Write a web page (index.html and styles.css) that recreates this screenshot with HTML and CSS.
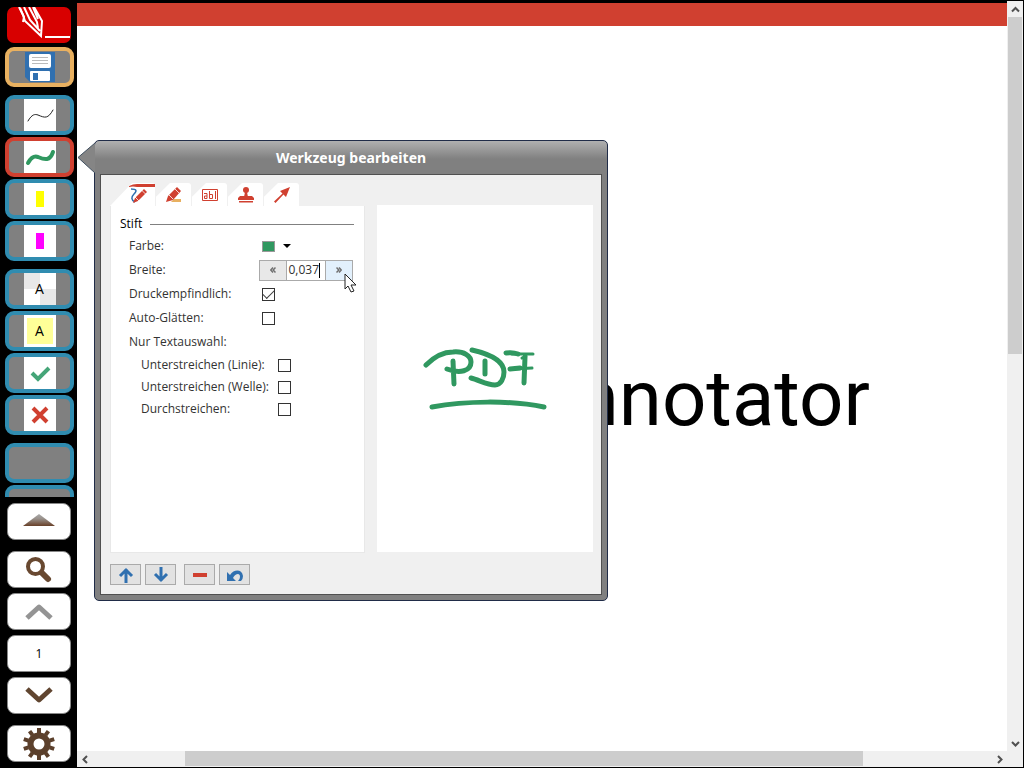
FILE: index.html
```html
<!DOCTYPE html>
<html lang="de">
<head>
<meta charset="utf-8">
<meta name="viewport" content="width=device-width, initial-scale=1">
<title>PDF Annotator</title>
<link rel="stylesheet" href="styles.css">
</head>
<body>
<div class="app">
  <nav class="sidebar" aria-label="Werkzeuge">
    <div class="tools">
      <button class="logo" aria-label="Menü"><svg width="64" height="36" viewBox="0 0 64 36" fill="none" stroke="#fff"><path d="M12 0l4 8 2 6 16 15 1-15L27 0M17 0l6 13 10 11M22 0l8 15 1 6M26 0l5 12" stroke-width="2"/><path d="M13 1l4 9-1 5" stroke-width="2"/><path d="M38 30h25" stroke-width="2"/></svg></button>
      <button class="tool save" aria-label="Speichern"><svg width="30" height="30" viewBox="0 0 30 30"><path fill="#3070b0" d="M0 0h30v30H5l-5-5z"/><rect x="4" y="2" width="22" height="14" rx="2" fill="#fff"/><path stroke="#bbb" d="M7 5.500h16M7 8.500h16M7 11.500h16"/><rect x="5" y="19" width="20" height="10" rx="1" fill="#fff"/><path fill="#3070b0" d="M8 21h5v7H8z"/></svg></button>
      <div class="group">
        <button class="tool" aria-label="Stift dünn"><span class="tile"><svg width="32" height="32" fill="none" stroke="#222" stroke-linecap="round"><path d="M4 22C8 15 11 15 14 16C21 19 24 20 29 11"/></svg></span></button>
        <button class="tool active" aria-label="Stift grün"><span class="tile"><svg width="32" height="32" fill="none" stroke="#309860" stroke-width="4" stroke-linecap="round"><path d="M4 22C8 15 11 15 14 16C21 19 26 20 29 11"/></svg></span></button>
        <button class="tool" aria-label="Textmarker gelb"><span class="tile"><span class="marker yellow"></span></span></button>
        <button class="tool" aria-label="Textmarker magenta"><span class="tile"><span class="marker magenta"></span></span></button>
      </div>
      <div class="group">
        <button class="tool"><span class="tile checker">A</span></button>
        <button class="tool"><span class="tile note">A</span></button>
        <button class="tool" aria-label="Haken"><span class="tile"><svg width="32" height="32" fill="none" stroke="#45a578" stroke-width="4"><path d="M8 16l6 6 11-11"/></svg></span></button>
        <button class="tool" aria-label="Kreuz"><span class="tile"><svg width="32" height="32" fill="none" stroke="#d04030" stroke-width="4"><path d="M9 9l14 14M23 9L9 23"/></svg></span></button>
      </div>
      <div class="group">
        <button class="tool" aria-label="Leer"></button>
        <button class="tool" aria-label="Leer"></button>
      </div>
    </div>
    <div class="controls">
      <button class="control split" aria-label="Einklappen"><svg width="32" height="16" viewBox="0 0 32 16"><defs><linearGradient id="g" x2="0" y2="1"><stop stop-color="#aaa"/><stop offset=".4" stop-color="#98908a"/><stop offset="1" stop-color="#684028"/></linearGradient></defs><path fill="url(#g)" d="M16 0l16 12H0z"/></svg></button>
      <button class="control" aria-label="Zoom"><svg width="32" height="32" fill="none" stroke="#684830"><circle cx="12.500" cy="12.500" r="7.500" stroke-width="4"/><path d="M19 19l6 6" stroke-width="6" stroke-linecap="round"/></svg></button>
      <button class="control" aria-label="Vorherige Seite"><svg width="32" height="32" fill="none" stroke="#949494" stroke-width="5" stroke-linejoin="round"><path d="M4 22l12-11 12 11"/></svg></button>
      <button class="control">1</button>
      <button class="control split" aria-label="Nächste Seite"><svg width="32" height="32" fill="none" stroke="#604530" stroke-width="5" stroke-linejoin="round"><path d="M4 9l12 11 12-11"/></svg></button>
      <button class="control" aria-label="Einstellungen"><svg width="32" height="32" viewBox="-16 -16 32 32" fill="none" stroke="#5c402c"><circle r="8.500" stroke-width="6"/><path stroke-width="4" d="M0-11v-5M0 11v5M6.500-8.900l2.900-4M-6.500 8.900l-2.900 4M10.500-3.400l4.700-1.500M-10.500 3.400l-4.700 1.500M10.500 3.400l4.700 1.500M-10.500-3.400l-4.700-1.500M6.500 8.900l2.900 4M-6.500-8.900l-2.900-4"/></svg></button>
    </div>
  </nav>

  <main class="viewer">
    <div class="page"><h1>PDF Annotator</h1></div>
    <div class="vscroll">
      <button aria-label="Nach oben"><svg width="9" height="9"><path d="M1 6.500L4.500 3 8 6.500"/></svg></button>
      <div class="track"><div class="thumb"></div></div>
      <button aria-label="Nach unten"><svg width="9" height="9"><path d="M1 3l3.500 3.500L8 3"/></svg></button>
    </div>
    <div class="hscroll">
      <button aria-label="Nach links"><svg width="9" height="9"><path d="M6 1L2.500 4.500 6 8"/></svg></button>
      <div class="track"><div class="thumb"></div></div>
      <button aria-label="Nach rechts"><svg width="9" height="9"><path d="M3 1l3.500 3.500L3 8"/></svg></button>
    </div>
    <div class="corner"></div>

    <section class="dialog" role="dialog" aria-labelledby="title">
      <svg class="pointer" width="18" height="30" viewBox="0 0 18 30"><path d="M18 0L1 14.500 18 30" fill="#858585" stroke="#405060"/></svg>
      <h2 id="title">Werkzeug bearbeiten</h2>
      <div class="content">
        <div class="left">
          <div class="tabs" role="tablist">
            <button class="tab current" role="tab" aria-label="Stift"><svg width="26" height="22" viewBox="0 0 26 22"><path d="M0 2Q4 0 8 0h18v3H8Q4 2 0 3z" fill="#d04030"/><path d="M2 5c6 0 6 2 3 5s-3 6 1 8" fill="none" stroke="#3070b0" stroke-width="1.500"/><path d="M4 19l2-5 9-9 3 3-9 9z" fill="#d04030"/><path d="M12.500 6l4 4M6 13l4 4" stroke="#fff" stroke-width=".8"/></svg></button>
            <button class="tab" role="tab" aria-label="Textmarker"><svg width="18" height="18"><path d="M9 13h7v3H6z" fill="#e8b060"/><path d="M1 16l2-6 9-9 4 4-8 9z" fill="#d04030"/><path d="M10 3l4 4M4 9l4 4" stroke="#fff" stroke-width=".8"/></svg></button>
            <button class="tab" role="tab" aria-label="Text"><svg width="16" height="12" fill="none" stroke="#d04030"><path d="M.500.500h15v11H.500zM2 4.500h3v5H2.500v-2.500H5M7.500 2v7.500h3v-4h-3M13.500 2v8"/></svg></button>
            <button class="tab" role="tab" aria-label="Stempel"><svg width="16" height="16" fill="#d04030"><circle cx="8" cy="3" r="3"/><path d="M7 5h2l1 5H6zM2 9h12l2 2v2H0v-2zM1 14h14v1.500H1z"/></svg></button>
            <button class="tab" role="tab" aria-label="Pfeil"><svg width="16" height="16" fill="#d04030"><path d="M16 0l-4 10-2.500-2.500L1.500 16 0 14.500l8.500-8L6 4z"/></svg></button>
          </div>
          <form class="panel">
            <h3>Stift</h3>
            <div class="row"><label for="color">Farbe:</label><button id="color" type="button" class="color" aria-label="Farbe wählen"><span class="swatch"></span><svg width="8" height="4"><path d="M0 0h8L4 4z"/></svg></button></div>
            <div class="row"><label for="width">Breite:</label><span class="spinner"><button type="button" aria-label="Kleiner"><svg width="6" height="6"><path d="M3 .500L.700 3 3 5.500M5.500.500L3.200 3l2.300 2.500"/></svg></button><input id="width" type="text" value="0,037"><button type="button" class="hover" aria-label="Größer"><svg width="6" height="6"><path d="M.500.500L2.800 3 .500 5.500M3 .500L5.300 3 3 5.500"/></svg></button><span class="caret"></span></span></div>
            <div class="row"><label for="pressure">Druckempfindlich:</label><input id="pressure" type="checkbox" checked></div>
            <div class="row"><label for="smooth">Auto-Glätten:</label><input id="smooth" type="checkbox"></div>
            <div class="row">Nur Textauswahl:</div>
            <div class="row sub"><label for="line">Unterstreichen (Linie):</label><input id="line" type="checkbox"></div>
            <div class="row sub"><label for="wave">Unterstreichen (Welle):</label><input id="wave" type="checkbox"></div>
            <div class="row sub"><label for="strike">Durchstreichen:</label><input id="strike" type="checkbox"></div>
          </form>
        </div>
        <div class="preview"><svg width="130" height="66" viewBox="420 346 130 66" fill="none" stroke="#309860" stroke-width="5" stroke-linecap="round" stroke-linejoin="round"><path d="M426 365C433 358 443 352 453 352C464 351 471 356 471 362C471 371 460 374 447 369M453 361L454 384M472 350C485 353 504 359 504 372C504 378 501 385 495 385C487 385 479 380 471 378M485 361V374M506 353Q513 352 518 354M525 357L524 383M510 369L520 368"/><path stroke-width="3" d="M512 354L533 354M514 369L532 368M522 358L526 356"/><path d="M432 407C465 401 510 400 544 407"/></svg></div>
        <div class="actions">
          <button aria-label="Nach oben"><svg width="16" height="16" fill="none" stroke="#3070b0" stroke-width="3"><path d="M8 16V2M2 9l6-6 6 6"/></svg></button>
          <button aria-label="Nach unten"><svg width="16" height="16" fill="none" stroke="#3070b0" stroke-width="3"><path d="M8 0v14M2 7l6 6 6-6"/></svg></button>
          <button class="minus" aria-label="Entfernen"><svg width="16" height="16"><path d="M1 6h14v4H1z" fill="#d04030"/></svg></button>
          <button aria-label="Rückgängig"><svg width="16" height="16"><path d="M0 5v9h9l-3-3C8 7 13 5 13 10q0 2-2 4h3q2-2 2-5C15 2 7 2 3 8z" fill="#3070b0"/></svg></button>
        </div>
      </div>
    </section>
    <svg class="cursor" width="13" height="20" viewBox="0 0 13 20"><path d="M1 1v15l3-3 3 6 3-1-3-6h5z" fill="#fff" stroke="#222"/></svg>
  </main>
</div>
</body>
</html>
```
FILE: styles.css
```css
* { box-sizing: border-box; }
body { margin: 0; background: #000; font: 12px/16px "Open Sans", "Noto Sans", sans-serif; color: #333; }
button, input { font: inherit; color: inherit; margin: 0; padding: 0; border: 0; background: none; }
button { display: flex; align-items: center; justify-content: center; }
h1, h2, h3 { margin: 0; }
svg { display: block; flex: none; }
.app { display: grid; grid-template-columns: 77px 1fr; height: 100vh; }

.sidebar { display: flex; flex-direction: column; min-height: 0; padding: 7px 3px 6px 5px; }
.tools { flex: 1; min-height: 0; overflow: hidden; display: flex; flex-direction: column; gap: 8px; }
.group { display: flex; flex-direction: column; gap: 2px; }
.tool { flex: none; width: 69px; height: 40px; border: 4px solid #308cb0; border-radius: 9px; background: #808080; }
.save { border-color: #e8b060; margin-top: -4px; }
.tool.active { border-color: #d04030; }
.logo { flex: none; width: 64px; height: 36px; margin-left: 2px; border-radius: 7px; background: #d80000; overflow: hidden; }
.tile { width: 32px; height: 32px; background: #fff; display: flex; align-items: center; justify-content: center; font-size: 14px; color: #000; }
.marker { width: 8px; height: 16px; }
.yellow { background: #ff0; }
.magenta { background: #f0f; }
.checker { background: conic-gradient(#fff 25%, #e8e8e8 0 50%, #fff 0 75%, #e8e8e8 0); }
.note { background: #ffff98; border: 3px solid #fff; }
.controls { display: flex; flex-direction: column; gap: 5px; padding: 6px 2px 0; }
.control { width: 64px; height: 37px; border: 1px solid #888; border-radius: 8px; background: #fff; color: #000; }
.split { margin-bottom: 6px; }

.viewer { position: relative; display: grid; grid-template-columns: 1fr 16px; grid-template-rows: 1fr 16px; min-width: 0; padding: 1px 1px 1px 0; background: #000; }
.page { margin-top: 2px; padding: 20px 137px 0 0; background: #fff; border-top: 23px solid #d04030; display: flex; align-items: center; justify-content: flex-end; overflow: hidden; }
.page h1 { font: 400 78px/92px Roboto, sans-serif; color: #000; white-space: nowrap; }
.vscroll, .hscroll, .corner { background: #f0f0f0; }
.vscroll { display: flex; flex-direction: column; }
.hscroll { display: flex; }
.vscroll button, .hscroll button { width: 16px; height: 16px; flex: none; }
.vscroll svg, .hscroll svg { fill: none; stroke: #505050; stroke-width: 2; }
.track { flex: 1; }
.vscroll .thumb { height: 47%; margin: 0 1px; background: #cdcdcd; }
.hscroll .thumb { height: 15px; width: 75.5%; margin-left: 10.2%; background: #cdcdcd; }

.dialog { position: absolute; left: 17px; top: 140px; width: 514px; padding: 0 5px; border: 1px solid #202c48; border-bottom-width: 1px; padding-bottom: 5px; border-radius: 5px; background: linear-gradient(#b0b0b0, #808080 18px); }
.pointer { position: absolute; left: -18px; top: 2px; }
.dialog h2 { font: 700 14px/33px "Noto Sans", "Open Sans", sans-serif; color: #fff; text-align: center; }
.content { display: grid; grid-template-columns: 255px 216px; column-gap: 12px; border: 1px solid #505050; background: #f0f0f0; padding: 8px 8px 9px 9px; }
.left { display: flex; flex-direction: column; }
.tabs { display: flex; gap: 1px; height: 23px; }
.tab { width: 35px; height: 23px; background: #fff; border-radius: 0 3px 0 0; clip-path: polygon(0 60%, 14px 0, 100% 0, 100% 100%, 0 100%); }
.tab.current { width: 45px; justify-content: flex-end; clip-path: polygon(0 100%, 22px 0, 100% 0, 100% 100%); }
.panel { min-height: 347px; background: #fff; padding: 8px 10px 7px 9px; border: 1px solid #e8e8e8; border-top: 0; }
.panel h3 { display: flex; align-items: center; gap: 8px; font-size: 12px; line-height: 20px; font-weight: 400; color: #000; }
.panel h3::after { content: ""; flex: 1; height: 1px; background: #808080; }
.row { display: grid; grid-template-columns: 133px 1fr; align-items: center; height: 24px; padding-left: 9px; }
.row.sub { grid-template-columns: 137px 1fr; height: 22px; padding-left: 21px; }
.color { justify-content: start; gap: 8px; height: 16px; }
.swatch { width: 13px; height: 11px; background: #309860; border: 1px solid #999; }
.spinner { position: relative; display: flex; width: 94px; height: 21px; margin-left: -3px; border: 1px solid #aaa; }
.spinner button { width: 26px; background: #e8e8e8; }
.spinner .hover { background: #e2f0fc; }
.spinner svg { fill: none; stroke: #707070; stroke-width: 1.5; }
.spinner input { flex: 1; min-width: 0; border: solid #aaa; border-width: 0 1px; text-align: right; padding-right: 6px; background: #fff; }
.caret { position: absolute; right: 32px; top: 2px; width: 1px; height: 15px; background: #000; }
input[type="checkbox"] { appearance: none; width: 13px; height: 13px; border: 1px solid #333; background: #fff; display: grid; place-items: center; }
input[type="checkbox"]:checked::after { content: ""; width: 10px; height: 5px; margin-top: -3px; border: solid #444; border-width: 0 0 1px 1px; rotate: -45deg; }
.preview { margin: 22px 0 1px; background: #fff; display: flex; align-items: center; justify-content: center; }
.actions { grid-column: 1 / -1; display: flex; gap: 4px; padding-top: 11px; }
.actions button { width: 31px; height: 21px; border: 1px solid #aaa; background: #e2e2e2; }
.actions .minus { margin-left: 4px; }
.cursor { position: absolute; left: 267px; top: 273px; }
```
